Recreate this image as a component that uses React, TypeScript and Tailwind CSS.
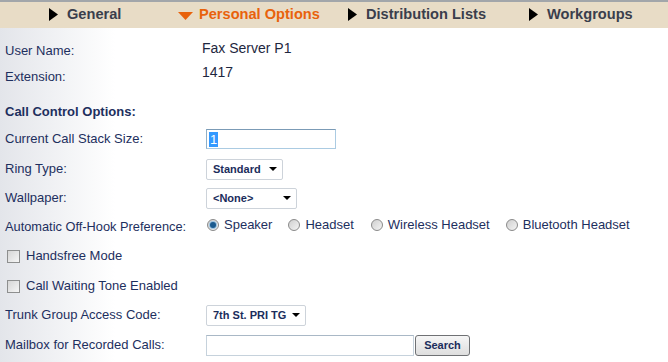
import React from 'react';

const LABEL = 'text-[13px] text-[#1d2f5e]';

function Tab({ label, active, width }: { label: string; active?: boolean; width: string }) {
  return (
    <div className={`flex items-center shrink-0 ${width}`}>
      {active ? (
        <svg width="15" height="8" viewBox="0 0 15 8" className="mr-[6px] mt-[3px]">
          <path d="M0 0 L15 0 L7.5 8 Z" fill="#e8620c" />
        </svg>
      ) : (
        <svg width="9" height="13" viewBox="0 0 9 13" className="mr-[9px]">
          <path d="M0 0 L9 6.5 L0 13 Z" fill="#000" />
        </svg>
      )}
      <span
        className={`text-[14.6px] font-bold ${active ? 'text-[#e8620c]' : 'text-[#3a3e4c]'}`}>
        {label}
      </span>
    </div>
  );
}

function Select({ value, width }: { value: string; width: string }) {
  return (
    <div
      className={`${width} h-[21px] flex items-center justify-between pl-[6px] pr-[5px] bg-white border border-[#cdd3da] rounded-[2px]`}>
      <span className="text-[11px] font-bold text-[#1b2d5c]">{value}</span>
      <svg width="8" height="4" viewBox="0 0 8 4">
        <path d="M0 0 L8 0 L4 4 Z" fill="#000" />
      </svg>
    </div>
  );
}

function Radio({ label, checked }: { label: string; checked?: boolean }) {
  return (
    <div className="flex items-center">
      <span className="w-[12px] h-[12px] rounded-full border border-[#8a8a8a] bg-[linear-gradient(135deg,#cfcfcf,#f4f4f4)] flex items-center justify-center">
        {checked && (
          <span className="w-[6px] h-[6px] rounded-full bg-[#1b5a8e] ring-1 ring-[#9cc3e0]" />
        )}
      </span>
      <span className={`ml-[5px] ${LABEL}`}>{label}</span>
    </div>
  );
}

function Checkbox({ label }: { label: string }) {
  return (
    <div className="flex items-center pl-[7px]">
      <span className="w-[13px] h-[13px] border border-[#8e8f8f] bg-[linear-gradient(135deg,#d6d6d6,#f6f6f6)]" />
      <span className={`ml-[6px] ${LABEL}`}>{label}</span>
    </div>
  );
}

function Row({
  label,
  className = '',
  children,
}: {
  label: string;
  className?: string;
  children?: React.ReactNode;
}) {
  return (
    <div className={`flex items-center h-[20px] ${className}`}>
      <div className={`w-[206px] pl-[5px] ${LABEL}`}>{label}</div>
      {children}
    </div>
  );
}

export default function App() {
  return (
    <div
      className="w-[668px] h-[362px] overflow-hidden bg-white"
      style={{ fontFamily: '"Liberation Sans", Arial, sans-serif' }}>
      {/* Tabs */}
      <div className="h-[28px] bg-[#e8dcc6] border-t-2 border-[#a2a6aa] flex items-center pl-[49px]">
        <Tab label="General" width="w-[129px]" />
        <Tab label="Personal Options" active width="w-[170px]" />
        <Tab label="Distribution Lists" width="w-[181px]" />
        <Tab label="Workgroups" width="w-[130px]" />
      </div>

      {/* Form */}
      <div className="h-[334px] bg-[linear-gradient(to_right,#e3e5ea,#ffffff_115px)] pt-[10px]">
        <div className="flex items-start h-[20px]">
          <div className={`w-[202px] pl-[5px] pt-[3px] ${LABEL}`}>User Name:</div>
          <div className="text-[14px] text-[#1e2740]">Fax Server P1</div>
        </div>
        <div className="flex items-start h-[20px] mt-[4px]">
          <div className={`w-[202px] pl-[5px] pt-[5px] ${LABEL}`}>Extension:</div>
          <div className="text-[14px] text-[#1e2740]">1417</div>
        </div>

        <div className="h-[20px] mt-[20px] pl-[5px] flex items-center text-[13px] font-bold text-[#1d2f5e]">
          Call Control Options:
        </div>

        <Row label="Current Call Stack Size:" className="mt-[7px]">
          <div className="w-[130px] h-[20px] bg-white border border-[#abcbe2] border-t-[#7b9bb6] border-l-[#8fb0c8] flex items-center pl-[2px]">
            <span className="text-[13px] leading-[15px] bg-[#3399ff] text-white px-[1px]">1</span>
          </div>
        </Row>

        <Row label="Ring Type:" className="mt-[10px]">
          <Select value="Standard" width="w-[77px]" />
        </Row>

        <Row label="Wallpaper:" className="mt-[9px]">
          <Select value="<None>" width="w-[91px]" />
        </Row>

        <div className="flex items-center h-[20px] mt-[7px]">
          <div className={`w-[207px] shrink-0 pl-[5px] pt-[3px] text-[12.8px] text-[#1d2f5e]`}>
            Automatic Off-Hook Preference:
          </div>
          <Radio label="Speaker" checked />
          <div className="w-[16px]" />
          <Radio label="Headset" />
          <div className="w-[17px]" />
          <Radio label="Wireless Headset" />
          <div className="w-[16px]" />
          <Radio label="Bluetooth Headset" />
        </div>

        <div className="h-[20px] mt-[11px] flex items-center">
          <Checkbox label="Handsfree Mode" />
        </div>
        <div className="h-[20px] mt-[10px] flex items-center">
          <Checkbox label="Call Waiting Tone Enabled" />
        </div>

        <Row label="Trunk Group Access Code:" className="mt-[9px]">
          <Select value="7th St. PRI TG" width="w-[100px]" />
        </Row>

        <Row label="Mailbox for Recorded Calls:" className="mt-[10px]">
          <div className="w-[208px] h-[21px] bg-white border border-[#c6d2dc] border-t-[#a9b8c6]" />
          <button className="ml-[1px] w-[55px] h-[21px] rounded-[3px] border border-[#6f7174] bg-[linear-gradient(to_bottom,#f6f6f6,#dedede)] text-[11px] font-bold text-[#1b2d5c]">
            Search
          </button>
        </Row>
      </div>
    </div>
  );
}
